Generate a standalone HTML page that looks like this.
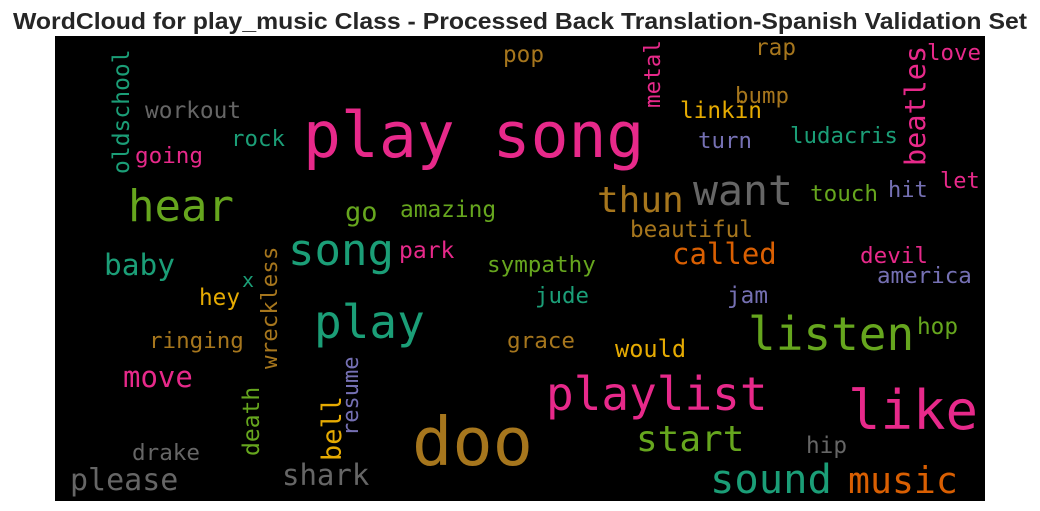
<!DOCTYPE html>
<html><head><meta charset="utf-8"><style>
html,body{margin:0;padding:0;background:#fff;width:1040px;height:511px;overflow:hidden}
svg{display:block}
.w{font-family:"DejaVu Sans Mono","Liberation Mono",monospace}
</style></head><body>
<svg width="1040" height="511" viewBox="0 0 1040 511">
<text x="520" y="29" text-anchor="middle" font-family="Liberation Sans, sans-serif" font-weight="bold" font-size="23" fill="#262626" textLength="1014" lengthAdjust="spacingAndGlyphs">WordCloud for play_music Class - Processed Back Translation-Spanish Validation Set</text>
<rect x="55" y="36" width="930" height="465" fill="#000"/>
<g class="w">
<text x="303" y="157" font-size="63" fill="#e7298a">play song</text>
<text x="128" y="221" font-size="44" fill="#66a61e">hear</text>
<text x="288" y="265" font-size="44" fill="#1b9e77">song</text>
<text x="314" y="338" font-size="46" fill="#1b9e77">play</text>
<text x="412" y="465" font-size="67" fill="#a6761d">doo</text>
<text x="848" y="429" font-size="54" fill="#e7298a">like</text>
<text x="546" y="410" font-size="46" fill="#e7298a">playlist</text>
<text x="748" y="350" font-size="46" fill="#66a61e">listen</text>
<text x="693" y="205" font-size="41.5" fill="#666666">want</text>
<text x="597" y="212" font-size="36" fill="#a6761d">thun</text>
<text x="710" y="493" font-size="40.5" fill="#1b9e77">sound</text>
<text x="848" y="493" font-size="36.5" fill="#d95f02">music</text>
<text x="636" y="451" font-size="36" fill="#66a61e">start</text>
<text x="70" y="490" font-size="30" fill="#666666">please</text>
<text x="282" y="485" font-size="29" fill="#666666">shark</text>
<text x="104" y="275" font-size="29.5" fill="#1b9e77">baby</text>
<text x="123" y="387" font-size="29" fill="#e7298a">move</text>
<text x="672" y="264" font-size="29" fill="#d95f02">called</text>
<text x="145" y="118" font-size="22.8" fill="#666666">workout</text>
<text x="135" y="163" font-size="22.6" fill="#e7298a">going</text>
<text x="231" y="146" font-size="22.4" fill="#1b9e77">rock</text>
<text x="345" y="221" font-size="27" fill="#66a61e">go</text>
<text x="400" y="217" font-size="22.8" fill="#66a61e">amazing</text>
<text x="399" y="258" font-size="23" fill="#e7298a">park</text>
<text x="487" y="272" font-size="22.6" fill="#66a61e">sympathy</text>
<text x="535" y="303" font-size="22.4" fill="#1b9e77">jude</text>
<text x="507" y="348" font-size="22.6" fill="#a6761d">grace</text>
<text x="615" y="357" font-size="23.6" fill="#e6ab02">would</text>
<text x="727" y="303" font-size="22.7" fill="#7570b3">jam</text>
<text x="917" y="334" font-size="22.7" fill="#66a61e">hop</text>
<text x="877" y="283" font-size="22.5" fill="#7570b3">america</text>
<text x="860" y="263" font-size="22.6" fill="#e7298a">devil</text>
<text x="630" y="237" font-size="22.7" fill="#a6761d">beautiful</text>
<text x="810" y="201" font-size="22.6" fill="#66a61e">touch</text>
<text x="888" y="197" font-size="22" fill="#7570b3">hit</text>
<text x="940" y="188" font-size="22" fill="#e7298a">let</text>
<text x="790" y="143" font-size="22.4" fill="#1b9e77">ludacris</text>
<text x="698" y="148" font-size="22.4" fill="#7570b3">turn</text>
<text x="680" y="118" font-size="22.7" fill="#e6ab02">linkin</text>
<text x="735" y="103" font-size="22.4" fill="#a6761d">bump</text>
<text x="755" y="55" font-size="22.7" fill="#a6761d">rap</text>
<text x="927" y="60" font-size="22.4" fill="#e7298a">love</text>
<text x="503" y="62" font-size="22.7" fill="#a6761d">pop</text>
<text x="199" y="305" font-size="22.7" fill="#e6ab02">hey</text>
<text x="149" y="348" font-size="22.5" fill="#a6761d">ringing</text>
<text x="132" y="460" font-size="22.6" fill="#666666">drake</text>
<text x="806" y="453" font-size="22.7" fill="#666666">hip</text>
<text x="242" y="287" font-size="20" fill="#1b9e77">x</text>
<text transform="translate(129,174) rotate(-90)" font-size="23" fill="#1b9e77">oldschool</text>
<text transform="translate(660,108) rotate(-90)" font-size="22.6" fill="#e7298a">metal</text>
<text transform="translate(925,166) rotate(-90)" font-size="28.5" fill="#e7298a">beatles</text>
<text transform="translate(277,369) rotate(-90)" font-size="22.6" fill="#a6761d">wreckless</text>
<text transform="translate(259,456) rotate(-90)" font-size="23" fill="#66a61e">death</text>
<text transform="translate(341,461) rotate(-90)" font-size="27" fill="#e6ab02">bell</text>
<text transform="translate(358,436) rotate(-90)" font-size="22" fill="#7570b3">resume</text>
</g>
</svg>
</body></html>
